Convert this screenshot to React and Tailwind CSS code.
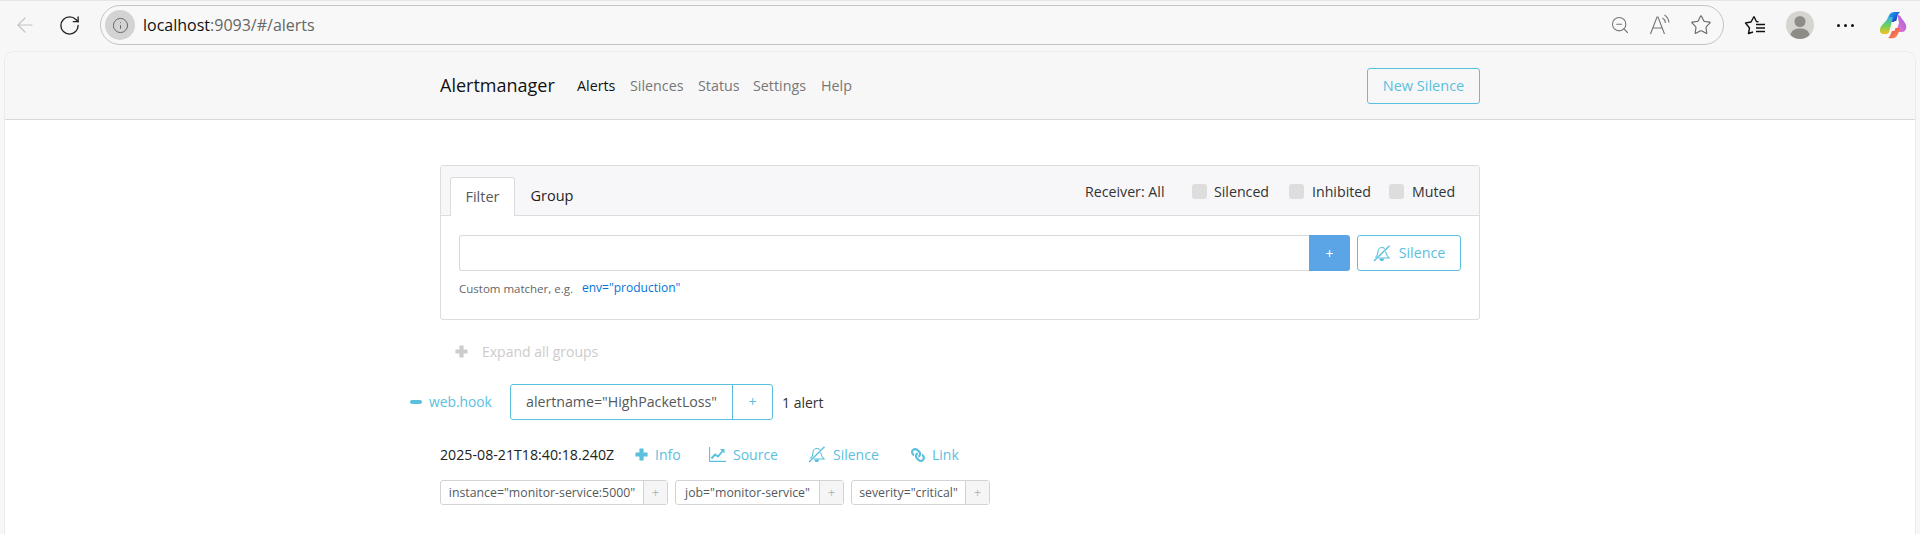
import { ArrowLeft, RotateCw, Info, ZoomOut, Star } from "lucide-react"
import { FaLink } from "react-icons/fa"

const ReadAloudIcon = () => (
  <svg width="22" height="22" viewBox="0 0 22 22" fill="none" stroke="#757575" strokeWidth="1.1">
    <path d="M1.5 20 L8 3 L9 3 L15.5 20 M4.2 14 H13" />
    <path d="M13.5 4 C15.2 5 16.2 6.5 16.5 9" />
    <path d="M15.5 1 C18 2.5 19.5 5 20 8.5" />
  </svg>
)

const FavoritesIcon = () => (
  <svg width="22" height="20" viewBox="0 0 22 20" fill="none" stroke="#111" strokeWidth="1.4">
    <path d="M10 1.5 L12.4 6.5 L14.5 6.8 M9 17 L4.5 18.5 L5.5 13 L1.5 8 L7 7 L10 1.5" strokeLinejoin="round" />
    <path d="M12 9.5 H21 M12 13 H21 M12 16.5 H21" />
  </svg>
)

const Avatar = () => (
  <svg width="28" height="28" viewBox="0 0 28 28">
    <circle cx="14" cy="14" r="14" fill="#d6d4d1" />
    <circle cx="14" cy="10.5" r="5.5" fill="#8f8b87" />
    <path d="M4.5 24 C5.5 19 9 17.5 14 17.5 C19 17.5 22.5 19 23.5 24 C21 26.5 17.5 28 14 28 C10.5 28 7 26.5 4.5 24 Z" fill="#8f8b87" />
  </svg>
)

const CopilotIcon = () => (
  <svg width="28" height="28" viewBox="0 0 28 28">
    <defs>
      <linearGradient id="cpA" x1="0" y1="0" x2="1" y2="0.6">
        <stop offset="0" stopColor="#2fb4ee" />
        <stop offset="0.6" stopColor="#1a72e0" />
        <stop offset="1" stopColor="#2030a8" />
      </linearGradient>
      <linearGradient id="cpB" x1="0.4" y1="0" x2="0.4" y2="1">
        <stop offset="0" stopColor="#2fb4e8" />
        <stop offset="0.5" stopColor="#6fcf5a" />
        <stop offset="1" stopColor="#f6c21e" />
      </linearGradient>
      <linearGradient id="cpC" x1="0" y1="1" x2="1" y2="0">
        <stop offset="0" stopColor="#f07ac0" />
        <stop offset="1" stopColor="#9a5cf0" />
      </linearGradient>
      <linearGradient id="cpD" x1="0" y1="0" x2="1" y2="1">
        <stop offset="0" stopColor="#e8402f" />
        <stop offset="1" stopColor="#fb9a6a" />
      </linearGradient>
    </defs>
    <path d="M9 7 C10 3 12 1 15 1 H21 C19.5 2 18.5 4 18 7 L17 11 H8 Z" fill="url(#cpA)" />
    <path d="M9 6 L14 6 L11 18 C10 22 9 23 7 23 H5 C2 23 0.5 21 1 18 C1.5 15 4 13 6 11 C7.5 9.5 8.5 8 9 6 Z" fill="url(#cpB)" />
    <path d="M18.5 4 C20 4 21 4.5 22 6.5 C23.5 9 26 11 27 14 C28 18 26 21 23 21 H17 L20 12 Z" fill="url(#cpC)" />
    <path d="M14 17 H21 C20 21 19 24 17 26 C15.5 27.5 13 27.5 9 27 C11 26 12.5 22 14 17 Z" fill="url(#cpD)" />
    <path d="M15.5 10 H19 L15.5 20 H12.5 Z" fill="#fdfdfd" />
  </svg>
)

const PlusIcon = () => (
  <svg width="13" height="13" viewBox="0 0 13 13" fill="currentColor">
    <path d="M5 0.5 H8 C8.4 0.5 8.6 0.8 8.6 1 V4.4 H12 C12.4 4.4 12.6 4.7 12.6 5 V8 C12.6 8.3 12.4 8.6 12 8.6 H8.6 V12 C8.6 12.3 8.4 12.6 8 12.6 H5 C4.7 12.6 4.4 12.3 4.4 12 V8.6 H1 C0.7 8.6 0.4 8.3 0.4 8 V5 C0.4 4.7 0.7 4.4 1 4.4 H4.4 V1 C4.4 0.8 4.7 0.5 5 0.5 Z" />
  </svg>
)

const ChartIcon = () => (
  <svg width="17" height="15" viewBox="0 0 17 15" fill="none" stroke="currentColor">
    <path d="M0.6 0 V14.4 H17" strokeWidth="1.1" />
    <path d="M2.5 11.5 L6 7.5 L9 9.5 L14 3.5" strokeWidth="1.9" />
    <path d="M11 2 H15.5 V6.5 Z" fill="currentColor" stroke="none" />
  </svg>
)

const BellSlashIcon = () => (
  <svg width="18" height="17" viewBox="0 0 18 17" fill="none" stroke="currentColor" strokeWidth="1.1">
    <path d="M2.5 12.5 C4.5 10.5 5 9 5 6.5 C5 4 7 2.5 9 2.5 C10 2.5 11 3 11.8 3.6 M12.6 6.5 C13 9 14 11 16 13 H5.5" />
    <path d="M1 16 L16.5 0.8" strokeWidth="1.4" />
    <path d="M7 14 C7.5 16 10 16 10.5 14 Z" fill="currentColor" />
  </svg>
)

const Label = ({ text, widthClass }) => (
  <div className="flex h-[25px] rounded-[3px] border border-[#d3d3d3] text-[12.3px] text-[#55595c]">
    <span className={`${widthClass} flex items-center justify-center whitespace-nowrap`}>{text}</span>
    <span className="flex w-[24px] items-center justify-center border-l border-[#d3d3d3] bg-[#f5f5f5] text-[#b5b5b5]">+</span>
  </div>
)

const AlertAction = ({ icon, label, className }) => (
  <a className={`flex items-center gap-[7px] text-[#5bc0de] ${className}`}>
    {icon}
    {label}
  </a>
)

export default function App() {
  return (
    <div className="h-[534px] overflow-hidden bg-[#f7f7f7] font-['Open_Sans',sans-serif] text-[14px]">
      {/* browser toolbar */}
      <div className="flex h-[51px] items-center border-t border-[#e6e6e6] pb-[2px]">
        <ArrowLeft className="ml-[13px] h-[24px] w-[24px] text-[#c4c4c4]" strokeWidth={1.2} />
        <RotateCw className="ml-[21px] h-[23px] w-[23px] text-[#222]" strokeWidth={1.4} />
        <div className="ml-[19px] flex h-[40px] w-[1624px] items-center rounded-full border border-[#c4c4c4] bg-[#f8f8f8] pr-[11px]">
          <span className="ml-[4px] flex h-[30px] w-[30px] items-center justify-center rounded-full bg-[#d3d3d3]">
            <Info className="h-[17px] w-[17px] text-[#666]" strokeWidth={1.4} />
          </span>
          <span className="ml-[8px] text-[16px] text-[#111]">
            localhost<span className="text-[#666]">:9093/#/alerts</span>
          </span>
          <div className="ml-auto flex items-center gap-[19px]">
            <ZoomOut className="h-[20px] w-[20px] text-[#757575]" strokeWidth={1.3} />
            <ReadAloudIcon />
            <Star className="h-[22px] w-[22px] text-[#666]" strokeWidth={1.2} />
          </div>
        </div>
        <div className="ml-[20px] flex items-center">
          <FavoritesIcon />
          <span className="ml-[20px]"><Avatar /></span>
          <span className="ml-[23px] flex gap-[4px]">
            <i className="h-[3px] w-[3px] rounded-full bg-[#111]" />
            <i className="h-[3px] w-[3px] rounded-full bg-[#111]" />
            <i className="h-[3px] w-[3px] rounded-full bg-[#111]" />
          </span>
          <span className="ml-[25px]"><CopilotIcon /></span>
        </div>
      </div>

      {/* page card */}
      <div className="mx-[4px] h-[483px] rounded-t-[10px] border border-b-0 border-[#ebebeb] bg-white">
        <nav className="h-[68px] rounded-t-[10px] border-b border-[#d9d9d9] bg-[#f7f7f7]">
          <div className="mx-auto flex h-full w-[1040px] items-center">
            <span className="w-[137px] text-[18px] text-[#111]">Alertmanager</span>
            <div className="flex text-[14.3px] text-[#777]">
              <a className="w-[53px] text-[#111]">Alerts</a>
              <a className="w-[68px]">Silences</a>
              <a className="w-[55px]">Status</a>
              <a className="w-[68px]">Settings</a>
              <a>Help</a>
            </div>
            <button className="ml-auto h-[36px] w-[113px] rounded-[3px] border border-[#5bc0de] text-[14.5px] text-[#5bc0de]">
              New Silence
            </button>
          </div>
        </nav>

        <main className="mx-auto w-[1040px] pt-[45px]">
          {/* filter panel */}
          <div className="h-[155px] rounded-[3px] border border-[#dcdcdc]">
            <div className="flex h-[50px] items-end border-b border-[#dcdcdc] bg-[#f7f7f9] pl-[9px]">
              <div className="-mb-px flex h-[39px] w-[65px] items-center justify-center rounded-t-[3px] border border-b-0 border-[#dcdcdc] bg-white text-[14.5px] text-[#55595c]">
                Filter
              </div>
              <div className="flex h-[39px] w-[74px] items-center justify-center text-[14.5px] text-[#222]">Group</div>
              <div className="ml-auto flex h-full w-[394px] items-center pt-[2px] text-[14.2px] text-[#333]">
                <span className="w-[107px]">Receiver: All</span>
                <span className="h-[15px] w-[15px] rounded-[3px] bg-[#dddddd]" />
                <span className="ml-[7px] w-[75px]">Silenced</span>
                <span className="h-[15px] w-[15px] rounded-[3px] bg-[#dddddd]" />
                <span className="ml-[8px] w-[77px]">Inhibited</span>
                <span className="h-[15px] w-[15px] rounded-[3px] bg-[#dddddd]" />
                <span className="ml-[8px]">Muted</span>
              </div>
            </div>
            <div className="px-[18px] pt-[19px]">
              <div className="flex h-[36px]">
                <div className="flex-1 rounded-l-[3px] border border-r-0 border-[#d9d9d9]" />
                <div className="flex w-[41px] items-center justify-center rounded-r-[3px] bg-[#5ba5e6] text-white">+</div>
                <button className="ml-[7px] flex w-[104px] items-center justify-center gap-[8px] rounded-[3px] border border-[#5bc0de] text-[14.3px] text-[#5bc0de]">
                  <BellSlashIcon />
                  Silence
                </button>
              </div>
              <div className="mt-[9px] flex items-center text-[11.5px] text-[#666]">
                <span>Custom matcher, e.g.</span>
                <code className="-mt-[2px] ml-[9px] font-['Open_Sans',sans-serif] text-[12px] text-[#0275d8]">env="production"</code>
              </div>
            </div>
          </div>

          {/* expand all */}
          <div className="mt-[21px] flex items-center pl-[15px] text-[14px] text-[#cccccc]">
            <PlusIcon />
            <span className="ml-[14px]">Expand all groups</span>
          </div>

          {/* alert group */}
          <div className="-ml-[30px] mt-[22px] flex items-center">
            <span className="h-[4px] w-[12px] rounded-[2px] bg-[#5bc0de]" />
            <span className="ml-[7px] w-[81px] text-[13.8px] text-[#5bc0de]">web.hook</span>
            <div className="flex h-[36px] rounded-[3px] border border-[#5bc0de] text-[14.2px] text-[#55595c]">
              <span className="flex w-[221px] items-center justify-center whitespace-nowrap">alertname="HighPacketLoss"</span>
              <span className="flex w-[40px] items-center justify-center border-l border-[#5bc0de] text-[#5bc0de]">+</span>
            </div>
            <span className="ml-[9px] text-[14px] text-[#333]">1 alert</span>
          </div>

          {/* alert row */}
          <div className="mt-[24px] flex items-center text-[14px]">
            <span className="w-[195px] text-[14.2px] text-[#222]">2025-08-21T18:40:18.240Z</span>
            <AlertAction className="w-[74px]" icon={<PlusIcon />} label="Info" />
            <AlertAction className="w-[99px]" icon={<ChartIcon />} label="Source" />
            <AlertAction className="w-[103px]" icon={<BellSlashIcon />} label="Silence" />
            <AlertAction icon={<FaLink className="h-[14px] w-[14px] -scale-x-100" />} label="Link" />
          </div>

          {/* labels */}
          <div className="mt-[15px] flex gap-[7px]">
            <Label text={'instance="monitor-service:5000"'} widthClass="w-[202px]" />
            <Label text={'job="monitor-service"'} widthClass="w-[143px]" />
            <Label text={'severity="critical"'} widthClass="w-[113px]" />
          </div>
        </main>
      </div>
    </div>
  )
}
